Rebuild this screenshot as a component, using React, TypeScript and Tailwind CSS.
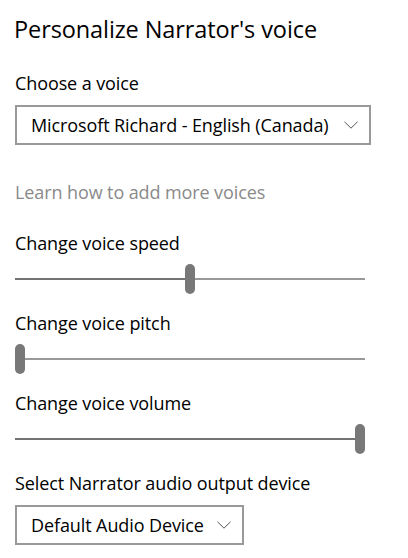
const font = { fontFamily: '"Open Sans", "Noto Sans", sans-serif' }

function Chevron() {
  return (
    <svg width="14" height="8" viewBox="0 0 14 8" className="shrink-0">
      <polyline points="0.5,0.8 7,7.2 13.5,0.8" fill="none" stroke="#555555" strokeWidth="1" />
    </svg>
  )
}

function Select({ value, width }: { value: string; width: string }) {
  return (
    <div className={`flex h-[40px] items-center border-2 border-[#999999] bg-white pl-[14px] pr-[11px] ${width}`}>
      <span className="flex-1 whitespace-nowrap text-[18px] tracking-[-0.1px] text-black">{value}</span>
      <Chevron />
    </div>
  )
}

function Label({ children }: { children: string }) {
  return <div className="flex h-[22px] items-center whitespace-nowrap text-[18px] tracking-[-0.1px] text-black">{children}</div>
}

function Slider({ value }: { value: number }) {
  const left = (340 * value) / 100
  return (
    <div className="relative h-[30px] w-[350px]">
      <div className="absolute left-0 right-0 top-[14px] h-[2px] bg-[#999999]" />
      <div className="absolute left-0 top-[14px] h-[2px] bg-[#737373]" style={{ width: left + 5 }} />
      <div className="absolute top-0 h-[30px] w-[10px] rounded-full bg-[#787878]" style={{ left }} />
    </div>
  )
}

export default function App() {
  return (
    <div className="h-[558px] w-[408px] overflow-hidden bg-white px-[15px]" style={font}>
      <div className="-ml-[1px] box-content flex h-[30px] items-center whitespace-nowrap pt-[15px] text-[23.5px] tracking-[-0.1px] text-black">
        Personalize Narrator's voice
      </div>
      <div className="mt-[27px]">
        <Label>Choose a voice</Label>
      </div>
      <div className="mt-[11px]">
        <Select value="Microsoft Richard - English (Canada)" width="w-[356px]" />
      </div>
      <div className="mt-[36px] flex h-[22px] items-center whitespace-nowrap text-[18px] tracking-[-0.1px] text-[#8a8a8a]">
        Learn how to add more voices
      </div>
      <div className="mt-[29px]">
        <Label>Change voice speed</Label>
      </div>
      <div className="mt-[10px]">
        <Slider value={50} />
      </div>
      <div className="mt-[18px]">
        <Label>Change voice pitch</Label>
      </div>
      <div className="mt-[10px]">
        <Slider value={0} />
      </div>
      <div className="mt-[18px]">
        <Label>Change voice volume</Label>
      </div>
      <div className="mt-[10px]">
        <Slider value={100} />
      </div>
      <div className="mt-[18px]">
        <Label>Select Narrator audio output device</Label>
      </div>
      <div className="mt-[11px]">
        <Select value="Default Audio Device" width="w-[229px]" />
      </div>
    </div>
  )
}
